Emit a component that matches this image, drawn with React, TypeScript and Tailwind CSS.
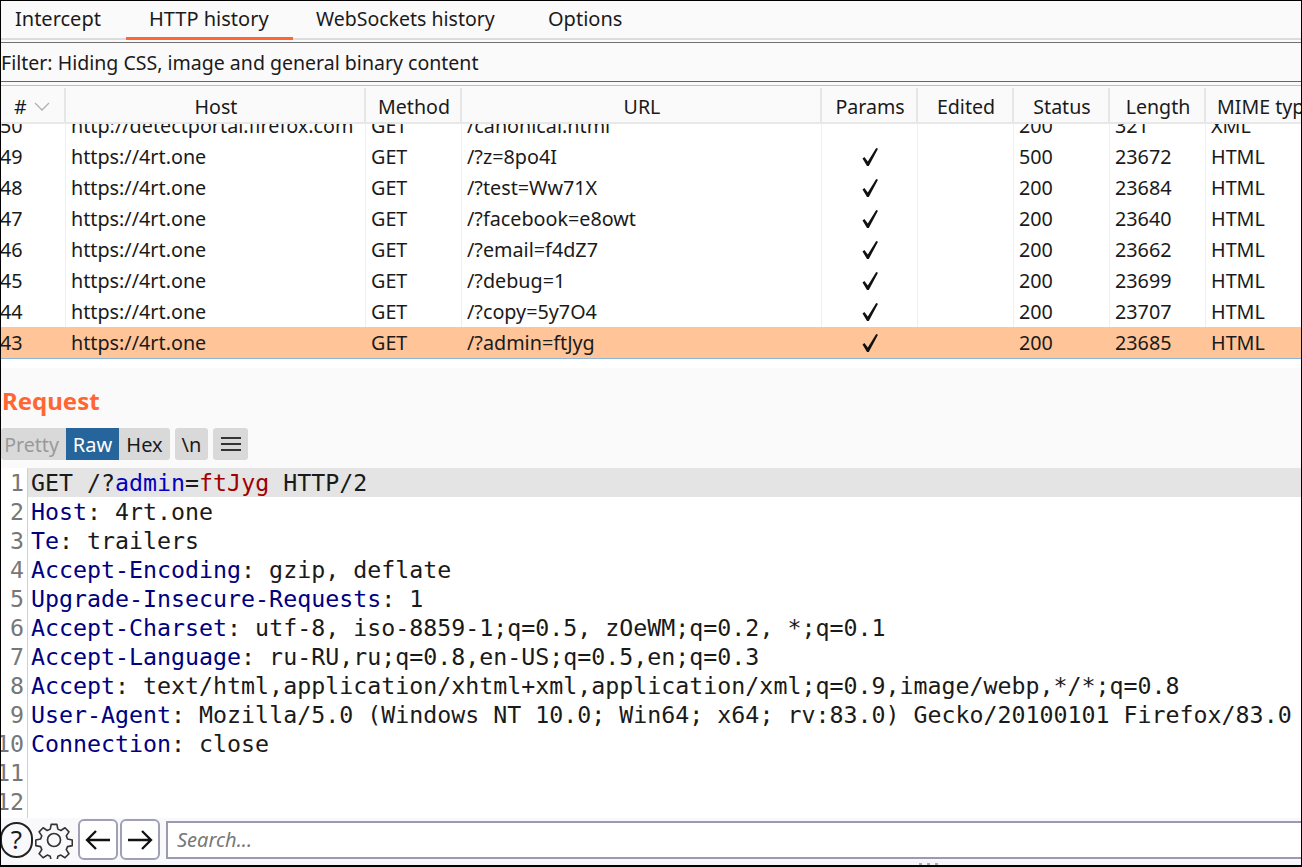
import React from "react";

const cols = "grid grid-cols-[65px_300px_96px_360px_96px_96px_96px_96px_96px]";
const rows = [
  ["50", "http://detectportal.firefox.com", "GET", "/canonical.html", "", "200", "321", "XML"],
  ["49", "https://4rt.one", "GET", "/?z=8po4I", "y", "500", "23672", "HTML"],
  ["48", "https://4rt.one", "GET", "/?test=Ww71X", "y", "200", "23684", "HTML"],
  ["47", "https://4rt.one", "GET", "/?facebook=e8owt", "y", "200", "23640", "HTML"],
  ["46", "https://4rt.one", "GET", "/?email=f4dZ7", "y", "200", "23662", "HTML"],
  ["45", "https://4rt.one", "GET", "/?debug=1", "y", "200", "23699", "HTML"],
  ["44", "https://4rt.one", "GET", "/?copy=5y7O4", "y", "200", "23707", "HTML"],
  ["43", "https://4rt.one", "GET", "/?admin=ftJyg", "y", "200", "23685", "HTML"],
];
const headers = ["Host", "Method", "URL", "Params", "Edited", "Status", "Length"];

const K = ({ children }: { children: React.ReactNode }) => <span className="text-[#000080]">{children}</span>;

const lines: React.ReactNode[] = [
  <><span>GET /?</span><span className="text-[#0000c0]">admin</span>=<span className="text-[#a00000]">ftJyg</span> HTTP/2</>,
  <><K>Host</K>: 4rt.one</>,
  <><K>Te</K>: trailers</>,
  <><K>Accept-Encoding</K>: gzip, deflate</>,
  <><K>Upgrade-Insecure-Requests</K>: 1</>,
  <><K>Accept-Charset</K>: utf-8, iso-8859-1;q=0.5, zOeWM;q=0.2, *;q=0.1</>,
  <><K>Accept-Language</K>: ru-RU,ru;q=0.8,en-US;q=0.5,en;q=0.3</>,
  <><K>Accept</K>: text/html,application/xhtml+xml,application/xml;q=0.9,image/webp,*/*;q=0.8</>,
  <><K>User-Agent</K>: Mozilla/5.0 (Windows NT 10.0; Win64; x64; rv:83.0) Gecko/20100101 Firefox/83.0</>,
  <><K>Connection</K>: close</>,
  <></>,
  <></>,
];

function Check() {
  return (
    <svg width="18" height="20" viewBox="0 0 18 20" className="text-[#111]">
      <path d="M1.5 11.5 L3.4 10 L6.8 14.6 L15.2 1 L17 1.8 L7.8 19 L6 19 Z" fill="currentColor" />
    </svg>
  );
}

function Gear() {
  return (
    <svg width="38" height="38" viewBox="0 0 38 38" fill="none" stroke="#333" strokeWidth="1.7" strokeLinejoin="round">
      <path d="M16 2.5h6l1 5 3.2 1.4 4.3-2.8 4.2 4.3-2.8 4.2 1.3 3.3 5 1v6l-5 1-1.3 3.2 2.8 4.3-4.2 4.2-4.3-2.8-3.2 1.3-1 5h-6l-1-5-3.2-1.3-4.3 2.8-4.2-4.2 2.8-4.3-1.3-3.2-5-1v-6l5-1 1.3-3.3-2.8-4.2 4.2-4.3 4.3 2.8 3.2-1.4z" transform="translate(1 1) scale(.95)" />
      <circle cx="19" cy="19" r="6.5" />
    </svg>
  );
}

export default function App() {
  const sep = "border-r border-[#f0f0f0]";
  return (
    <div className="w-[1302px] h-[867px] overflow-hidden bg-[#fafafa] text-[#1a1a1a] border border-b-2 border-black flex flex-col font-['Noto_Sans',sans-serif] text-[20px] leading-[27px]">
      {/* Tabs */}
      <div className="h-[39px] shrink-0 flex items-start border-b-2 border-[#dcdcdc]">
        <div className="w-[125px] h-[39px] pl-[14px] pt-[4px]">Intercept</div>
        <div className="w-[167px] h-[39px] pt-[4px] pl-[23px] border-b-[3px] border-[#ff6633]">HTTP history</div>
        <div className="w-[232px] h-[39px] pt-[4px] pl-[23px] text-[19.5px]">WebSockets history</div>
        <div className="h-[39px] pt-[4px] pl-[23px]">Options</div>
      </div>
      <div className="h-[3px] shrink-0 border-b border-[#707070]" />
      {/* Filter */}
      <div className="h-[39px] shrink-0 flex items-center border-b border-[#666] text-[19.55px]">
        Filter: Hiding CSS, image and general binary content
      </div>
      <div className="h-[4px] shrink-0 bg-[#fafafa] border-b border-[#a8c4e4]" />
      {/* Table */}
      <div className="h-[273px] shrink-0 flex flex-col bg-white overflow-hidden border-b border-[#8fb4dc]">
        <div className={`${cols} h-[38px] shrink-0 bg-[#fafafa] border-b-2 border-[#e8e8e8] pt-[2px] text-[19.6px]`}>
          <div className="flex items-center pl-[13px] pt-[2px] gap-[7px] border-r-2 border-[#e6e6e6]">
            #
            <svg width="16" height="9" viewBox="0 0 16 9" fill="none" stroke="#b0b0b0" strokeWidth="1.3"><path d="M1 1l7 7 7-7" /></svg>
          </div>
          {headers.map((h) => (
            <div key={h} className="flex items-center justify-center pl-[2px] pt-[2px] border-r-2 border-[#e6e6e6]">{h}</div>
          ))}
          <div className="flex items-center pl-[11px] pt-[2px] whitespace-nowrap overflow-hidden">MIME type</div>
        </div>
        <div className="flex-1 min-h-0 overflow-hidden flex flex-col justify-end text-[19.75px]">
          {rows.map((r) => {
            const sel = r[0] === "43";
            const b = sel ? "" : sep;
            return (
              <div key={r[0]} className={`${cols} h-[31px] shrink-0 items-stretch ${sel ? "bg-[#ffc599]" : ""}`}>
                <div className={`flex items-center -ml-[1px] ${b}`}>{r[0]}</div>
                <div className={`flex items-center pl-[5px] whitespace-nowrap ${b}`}>{r[1]}</div>
                <div className={`flex items-center pl-[5px] ${b}`}>{r[2]}</div>
                <div className={`flex items-center pl-[5px] ${b}`}>{r[3]}</div>
                <div className={`flex items-center justify-center ${b}`}>{r[4] ? <Check /> : null}</div>
                <div className={b} />
                <div className={`flex items-center pl-[5px] ${b}`}>{r[5]}</div>
                <div className={`flex items-center pl-[5px] ${b}`}>{r[6]}</div>
                <div className="flex items-center pl-[5px]">{r[7]}</div>
              </div>
            );
          })}
        </div>
      </div>
      {/* Request header */}
      <div className="h-[9px] shrink-0 bg-white" />
      <div className="h-[60px] shrink-0 pl-[1px] pt-[18px] font-bold text-[24px] leading-[30px] text-[#ff6633]">Request</div>
      <div className="h-[32px] shrink-0 flex items-stretch">
        <div className="w-[65px] bg-[#d9d9d9] text-[#999] flex items-center justify-center pr-[4px] text-[19.6px] rounded-l-[3px]">Pretty</div>
        <div className="w-[53px] bg-[#26649c] text-white flex items-center justify-center">Raw</div>
        <div className="w-[51px] bg-[#d9d9d9] flex items-center justify-center rounded-r-[3px]">Hex</div>
        <div className="w-[33px] ml-[5px] bg-[#d9d9d9] flex items-center justify-center rounded-[3px]">\n</div>
        <div className="w-[35px] ml-[5px] bg-[#d9d9d9] flex items-center justify-center rounded-[3px]">
          <svg width="20" height="14" viewBox="0 0 20 14" fill="#333"><rect y="0" width="20" height="2" /><rect y="6" width="20" height="2" /><rect y="12" width="20" height="2" /></svg>
        </div>
      </div>
      {/* Editor */}
      <div className="mt-[8px] h-[350px] shrink-0 bg-white flex flex-col font-['DejaVu_Sans_Mono',monospace] text-[23.27px] leading-[29px] overflow-hidden whitespace-pre">
        {lines.map((l, i) => (
          <div key={i} className="flex h-[29px] shrink-0">
            <div className="w-[27px] shrink-0 text-[#777] border-r border-[#d0d0d0] pr-[3px] flex justify-end">{i + 1}</div>
            <div className={`flex-1 pl-[3px] ${i === 0 ? "bg-[#e4e4e4]" : ""}`}>{l}</div>
          </div>
        ))}
        <div className="flex-1 min-h-0 w-[27px] border-r border-[#d0d0d0]" />
      </div>
      {/* Bottom bar */}
      <div className="h-[43px] shrink-0 flex items-center bg-[#f9f9fb]">
        <div className="w-[33px] h-[36px] -ml-[1px] rounded-full border-2 border-[#222] flex items-center justify-center text-[26px] shrink-0">?</div>
        <div className="ml-[2px] shrink-0"><Gear /></div>
        <div className="w-[40px] h-[41px] ml-[5px] rounded-[6px] border-2 border-[#a0a0b4] bg-white flex items-center justify-center shrink-0">
          <svg width="26" height="22" viewBox="0 0 26 22" fill="none" stroke="#111" strokeWidth="2.3"><path d="M25 11H2M11 2l-9 9 9 9" /></svg>
        </div>
        <div className="w-[40px] h-[41px] ml-[2px] rounded-[6px] border-2 border-[#a0a0b4] bg-white flex items-center justify-center shrink-0">
          <svg width="26" height="22" viewBox="0 0 26 22" fill="none" stroke="#111" strokeWidth="2.3"><path d="M1 11h23M15 2l9 9-9 9" /></svg>
        </div>
        <div className="ml-[6px] flex-1 h-[38px] border-y-2 border-l-2 border-[#9a9ab0] bg-white italic text-[#777] pl-[9px] flex items-center">Search...</div>
      </div>
      <div className="h-[4px] shrink-0 bg-[#f6f6fa] flex justify-start gap-[5px] pl-[918px] items-end">
        <span className="w-[3px] h-[2px] bg-[#aaa]" /><span className="w-[3px] h-[2px] bg-[#aaa]" /><span className="w-[3px] h-[2px] bg-[#aaa]" />
      </div>
    </div>
  );
}
